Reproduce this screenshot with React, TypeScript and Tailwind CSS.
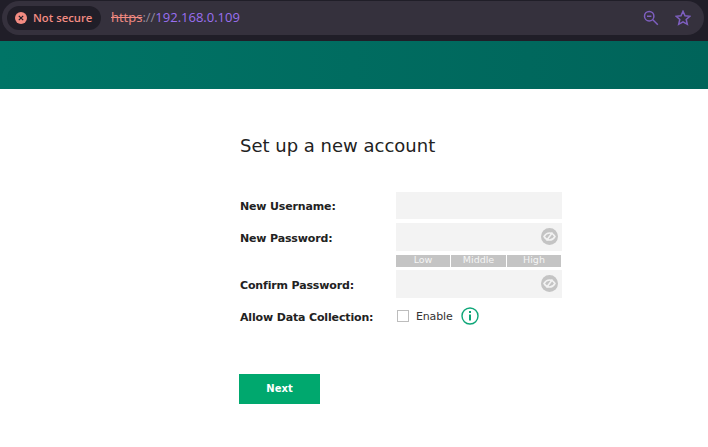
// App.tsx
const EyeOff = () => (
  <svg width="17" height="17" viewBox="0 0 17 17">
    <circle cx="8.5" cy="8.5" r="8.5" fill="#c4c4c4" />
    <path d="M3 8.5C4.5 6 6.5 5 8.5 5s4 1 5.5 3.5C12.500 11 10.500 12 8.500 12S4.500 11 3 8.500Z" fill="none" stroke="#f2f2f2" strokeWidth="1.500" />
    <path d="M11.500 4.500 5.500 12.500" stroke="#f2f2f2" strokeWidth="1.500" />
  </svg>
);

const Row = ({ label, children, className }: { label: string; children: React.ReactNode; className: string }) => (
  <div className={`flex items-center ${className}`}>
    <label className="w-[157px] shrink-0 pt-1 pl-px text-[11px] font-bold tracking-[-0.15px] text-[#222]">{label}</label>
    {children}
  </div>
);

const App = () => {
  return (
    <div className="h-[447px] w-[708px] overflow-hidden bg-white font-['DejaVu_Sans',sans-serif]">
      {/* Browser bar */}
      <div className="h-[41px] bg-[#201e28] pt-px pl-0.5 font-['Open_Sans',sans-serif]">
        <div className="flex h-[34px] w-[702px] items-center rounded-full bg-[#35313d] pl-[5px] pr-[13px]">
          <div className="flex h-6 w-[94px] items-center gap-[6px] rounded-full bg-[#201e28] pl-2">
            <span className="flex h-3 w-3 items-center justify-center rounded-full bg-[#f28b82]">
              <svg width="6" height="6" viewBox="0 0 6 6">
                <path d="M.8.8l4.400 4.400M5.200.8.800 5.200" stroke="#201e28" strokeWidth="1.200" />
              </svg>
            </span>
            <span className="text-[11.300px] font-semibold whitespace-nowrap text-[#f28b82]">Not secure</span>
          </div>
          <div className="ml-[10px] text-[13px] whitespace-nowrap">
            <span className="text-[#f28b82] line-through">https</span>
            <span className="text-[#8f8a99]">://</span>
            <span className="text-[#9a6ff0]">192.168.0.109</span>
          </div>
          <div className="ml-auto flex items-center gap-[16px]">
            <svg width="16" height="16" viewBox="0 0 16 16" fill="none" stroke="#7e5fc0" strokeWidth="1.500">
              <circle cx="6.200" cy="6.200" r="4.700" />
              <path d="M4 6.200h4.400M9.800 9.800l5 5" />
            </svg>
            <svg width="16" height="16" viewBox="0 0 16 16" fill="none" stroke="#7e5fc0" strokeWidth="1.500">
              <path d="M8 1.300l2 4.500 4.900.5-3.700 3.200 1.100 4.800L8 11.800l-4.300 2.500 1.100-4.800L1.100 6.300 6 5.800Z" />
            </svg>
          </div>
        </div>
      </div>

      {/* Teal band */}
      <div className="h-[48px] bg-gradient-to-r from-[#007466] to-[#00645a]" />

      {/* Form */}
      <div className="pt-[45px] pl-[239px]">
        <h1 className="pl-px text-[18px] leading-6 text-[#222]">Set up a new account</h1>

        <Row label="New Username:" className="mt-[34px]">
          <input className="h-[27px] w-[166px] bg-[#f3f3f3]" />
        </Row>
        <Row label="New Password:" className="mt-1">
          <div className="flex h-[28px] w-[166px] items-center justify-end bg-[#f3f3f3] pr-1 pb-0.5">
            <EyeOff />
          </div>
        </Row>
        <div className="mt-1 ml-[157px] flex h-3 w-[165px] gap-px text-center text-[9.500px] leading-[10px] text-[#f5f5f5]">
          <div className="w-[54px] bg-[#c4c4c4]">Low</div>
          <div className="w-[55px] bg-[#c4c4c4]">Middle</div>
          <div className="flex-1 bg-[#c4c4c4]">High</div>
        </div>
        <Row label="Confirm Password:" className="mt-[3px]">
          <div className="flex h-[28px] w-[166px] items-center justify-end bg-[#f3f3f3] pr-1 pb-0.5">
            <EyeOff />
          </div>
        </Row>
        <Row label="Allow Data Collection:" className="mt-2">
          <div className="ml-px flex h-5 items-center">
            <span className="h-3 w-3 border border-[#bdbdbd] bg-white" />
            <span className="ml-[7px] pt-0.5 text-[11px] tracking-[-0.15px] text-[#333]">Enable</span>
            <svg className="ml-2" width="18" height="18" viewBox="0 0 18 18" fill="none" stroke="#0ea678">
              <circle cx="9" cy="9" r="8" strokeWidth="1.400" />
              <path d="M9 7.500v6" strokeWidth="2" />
              <path d="M9 4v2" strokeWidth="2" />
            </svg>
          </div>
        </Row>

        <button className="mt-[47px] h-[30px] w-[81px] bg-[#00a86e] text-[10px] font-bold text-white">Next</button>
      </div>
    </div>
  );
};

export default App;
